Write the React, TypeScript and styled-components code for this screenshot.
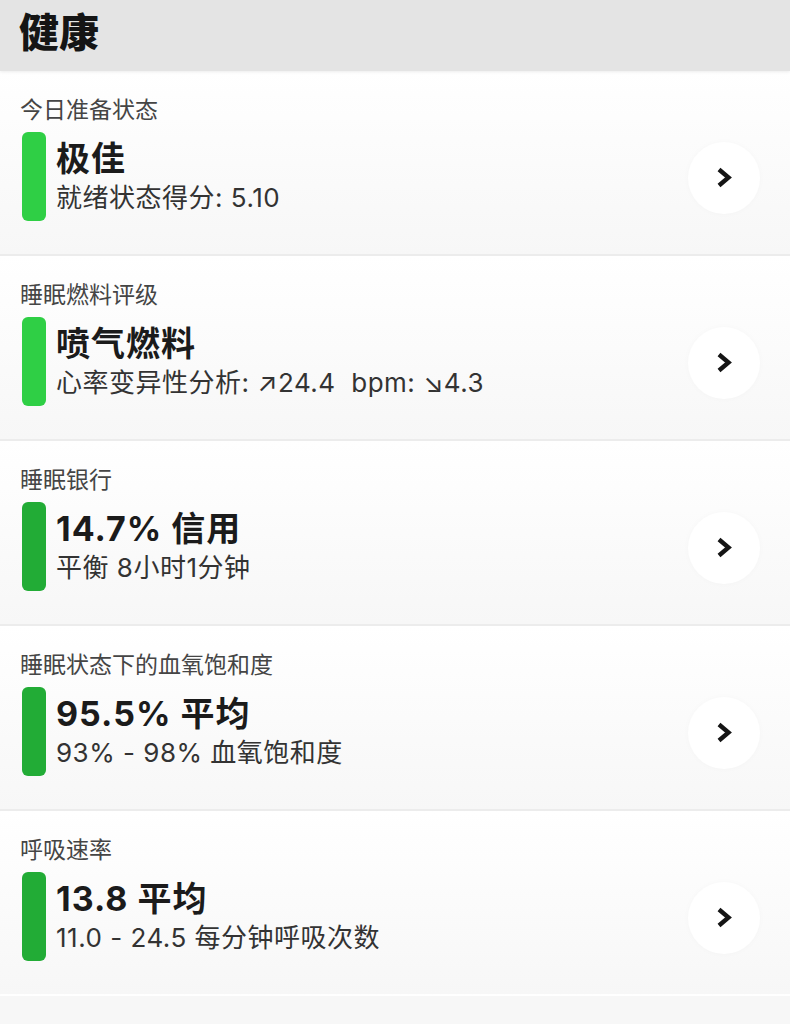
import React from "react";
import styled, { createGlobalStyle } from "styled-components";

const Global = createGlobalStyle`
  html, body { margin: 0; padding: 0; background: #f7f7f7; }
  body { font-family: "Inter", "Noto Sans CJK SC", "Noto Sans", sans-serif; }
`;

const Page = styled.div`
  width: 790px;
  min-height: 1024px;
  background: #f7f7f7;
  display: flex;
  flex-direction: column;
`;

const Header = styled.header`
  height: 71px;
  box-sizing: border-box;
  padding: 8px 0 0 19px;
  background: #e4e4e4;
  box-shadow: 0 1px 3px rgba(0, 0, 0, 0.08);
  position: relative;
  z-index: 1;
`;

const HeaderTitle = styled.h1`
  margin: 0;
  font-family: "Noto Sans CJK SC", sans-serif;
  font-size: 40px;
  line-height: 44px;
  font-weight: 900;
  color: #151515;
`;

const Card = styled.section<{ $last?: boolean }>`
  height: 185px;
  box-sizing: border-box;
  padding: 23px 30px 0 20px;
  background: linear-gradient(#ffffff, #f7f7f7);
  border-bottom: 2px solid ${(p) => (p.$last ? "transparent" : "#ececec")};
  display: flex;
  flex-direction: column;
  gap: 10px;
`;

const Label = styled.div`
  font-family: "Noto Sans CJK SC", sans-serif;
  font-size: 23px;
  line-height: 28px;
  color: #454545;
`;

const Row = styled.div`
  display: flex;
  align-items: center;
`;

const Bar = styled.div<{ $color: string }>`
  width: 24px;
  height: 89px;
  margin-left: 2px;
  border-radius: 6px;
  background: ${(p) => p.$color};
  flex-shrink: 0;
`;

const Texts = styled.div`
  align-self: flex-start;
  padding: 6px 0 0 10px;
  display: flex;
  flex-direction: column;
  flex: 1;
`;

const Title = styled.div`
  font-size: 34px;
  line-height: 42px;
  font-weight: 700;
  color: #1b1b1b;
  letter-spacing: 1px;
`;

const Sub = styled.div`
  font-size: 26px;
  line-height: 36px;
  font-weight: 400;
  color: #333333;
  letter-spacing: 0.5px;
  white-space: pre;
`;

const ChevronButton = styled.button`
  width: 72px;
  height: 72px;
  border-radius: 50%;
  border: none;
  padding: 0;
  background: #ffffff;
  box-shadow: 0 0 6px rgba(0, 0, 0, 0.025);
  display: flex;
  align-items: center;
  justify-content: center;
  flex-shrink: 0;
  margin-top: 2px;
`;

const Chevron = () => (
  <svg width="17" height="21" viewBox="0 0 17 21">
    <path d="M3 2.5 L12.5 10.5 L3 18.5" fill="none" stroke="#151515" strokeWidth="4.4" strokeLinejoin="miter" />
  </svg>
);

const BRIGHT = "#2fcf45";
const DARK = "#22ac36";

const items = [
  { label: "今日准备状态", title: "极佳", sub: "就绪状态得分: 5.10", color: BRIGHT },
  { label: "睡眠燃料评级", title: "喷气燃料", sub: "心率变异性分析: ↗24.4  bpm: ↘4.3", color: BRIGHT },
  { label: "睡眠银行", title: "14.7% 信用", sub: "平衡 8小时1分钟", color: DARK },
  { label: "睡眠状态下的血氧饱和度", title: "95.5% 平均", sub: "93% - 98% 血氧饱和度", color: DARK },
  { label: "呼吸速率", title: "13.8 平均", sub: "11.0 - 24.5 每分钟呼吸次数", color: DARK },
];

export default function App() {
  return (
    <Page>
      <Global />
      <Header>
        <HeaderTitle>健康</HeaderTitle>
      </Header>
      {items.map((it, i) => (
        <Card key={it.label} $last={i === items.length - 1}>
          <Label>{it.label}</Label>
          <Row>
            <Bar $color={it.color} />
            <Texts>
              <Title>{it.title}</Title>
              <Sub>{it.sub}</Sub>
            </Texts>
            <ChevronButton aria-label="详情">
              <Chevron />
            </ChevronButton>
          </Row>
        </Card>
      ))}
    </Page>
  );
}
